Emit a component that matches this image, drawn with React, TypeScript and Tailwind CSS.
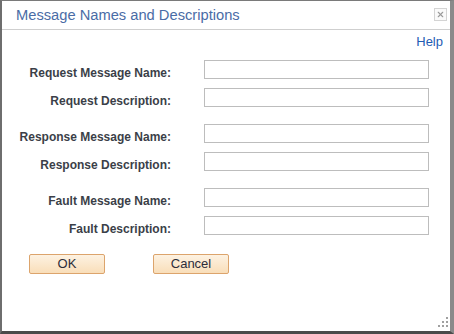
import { X } from 'lucide-react';

const groups = [
  ['Request Message Name:', 'Request Description:'],
  ['Response Message Name:', 'Response Description:'],
  ['Fault Message Name:', 'Fault Description:'],
];

const FormRow = ({ label }: { label: string }) => (
  <div className="flex h-[19px] items-start">
    <label className="w-[169px] pt-[7px] text-right text-[12px] leading-[12px] font-bold text-[#3b3f48]">
      {label}
    </label>
    <input
      type="text"
      className="ml-[33px] h-[19px] w-[225px] border border-[#bdbdbd] bg-white px-1 text-[12px] outline-none"
    />
  </div>
);

const DialogButton = ({ children }: { children: string }) => (
  <button className="h-[20px] w-[76px] rounded-[2px] border border-[#dca46c] bg-gradient-to-b from-[#fdf2e2] to-[#f9deb9] text-[13px] leading-[18px] text-[#2d2d3a]">
    {children}
  </button>
);

export default function App() {
  return (
    <div
      className="relative flex h-[334px] w-[454px] flex-col overflow-hidden border-t border-r-[4px] border-b-[3px] border-l-[2px] border-t-[#7a7a7a] border-r-[#8a8a8a] border-b-[#4a4a4a] border-l-[#6e6e6e] bg-white"
      style={{ fontFamily: '"Liberation Sans", Arial, sans-serif' }}
    >
      {/* title bar */}
      <div className="flex h-[29px] shrink-0 items-center justify-between border-b border-[#cfcfcf] pl-[14px] pr-[3px]">
        <h1 className="text-[14.7px] leading-[18px] text-[#4a6ca6]">Message Names and Descriptions</h1>
        <button className="mb-[2px] flex h-[13px] w-[13px] items-center justify-center border border-[#d4d4d4] bg-[#fafafa] text-[#9a9a9a]">
          <X size={9} strokeWidth={3} />
        </button>
      </div>

      <div className="flex justify-end pt-[4px] pr-[7px]">
        <a href="#" className="text-[13px] leading-[15px] text-[#1f5cb4]">
          Help
        </a>
      </div>

      <div className="mt-[11px] flex flex-col gap-[17px]">
        {groups.map((g, i) => (
          <div key={i} className="flex flex-col gap-[9px]">
            {g.map(label => (
              <FormRow key={label} label={label} />
            ))}
          </div>
        ))}
      </div>

      <div className="mt-[19px] flex gap-[48px] pl-[27px]">
        <DialogButton>OK</DialogButton>
        <DialogButton>Cancel</DialogButton>
      </div>

      {/* resize grip */}
      <div className="absolute right-[2px] bottom-[4px] grid grid-cols-3 gap-[2px]">
        <span className="h-[2px] w-[2px]" />
        <span className="h-[2px] w-[2px]" />
        <span className="h-[2px] w-[2px] bg-[#a0a0a0]" />
        <span className="h-[2px] w-[2px]" />
        <span className="h-[2px] w-[2px] bg-[#a0a0a0]" />
        <span className="h-[2px] w-[2px] bg-[#a0a0a0]" />
        <span className="h-[2px] w-[2px] bg-[#a0a0a0]" />
        <span className="h-[2px] w-[2px] bg-[#a0a0a0]" />
        <span className="h-[2px] w-[2px] bg-[#a0a0a0]" />
      </div>
    </div>
  );
}
